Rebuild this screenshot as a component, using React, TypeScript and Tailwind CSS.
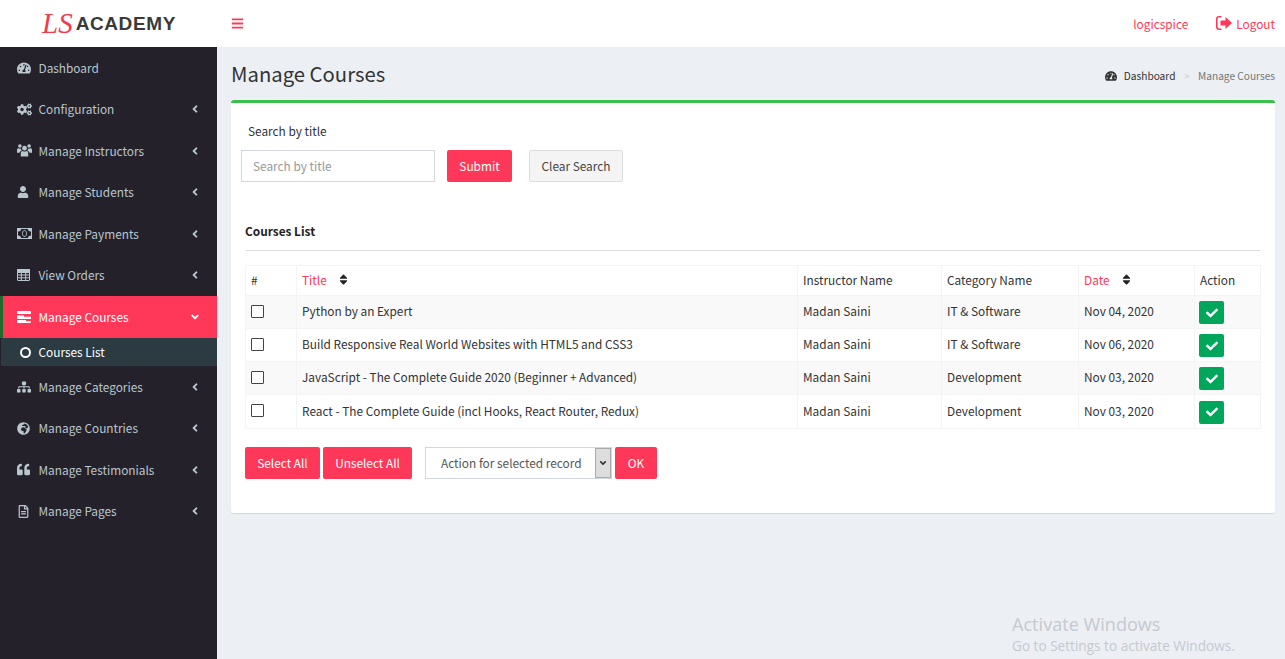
import React from "react";
import { FaTachometerAlt, FaCogs, FaUser, FaSitemap, FaGlobeAfrica, FaQuoteLeft, FaRegFileAlt, FaAngleLeft, FaAngleDown, FaBars, FaCheck, FaSort } from "react-icons/fa";

const font = { fontFamily: '"Noto Sans CJK SC", "Noto Sans", sans-serif' };

function CoursesIcon() {
  return (
    <svg viewBox="0 0 14 12" className="w-[14px] h-[12px]" fill="currentColor">
      <path d="M0 1a1 1 0 0 1 1-1h12a1 1 0 0 1 1 1v2H0zM0 4.500h7v1.200h7V8H0zM0 9h9v1.200h5V11a1 1 0 0 1-1 1H1a1 1 0 0 1-1-1z" />
    </svg>
  );
}

function LogoutIcon() {
  return (
    <svg viewBox="0 0 16 14" className="w-4 h-[14px]" fill="currentColor">
      <path d="M5.500 0H3a3 3 0 0 0-3 3v8a3 3 0 0 0 3 3h2.500v-1.600H3A1.400 1.400 0 0 1 1.600 11V3A1.400 1.400 0 0 1 3 1.600h2.500z" />
      <path d="M9.500 1 16 7l-6.500 6V9.500H4.500v-5h5z" />
    </svg>
  );
}

function UsersIcon() {
  return (
    <svg viewBox="0 0 15 13" className="w-[15px] h-[13px]" fill="currentColor">
      <circle cx="7.500" cy="4.200" r="2.400" />
      <path d="M3.800 12.500V9.300c0-1.500 1-2.300 2-2.300.5.400 1 .6 1.700.6s1.200-.2 1.700-.6c1 0 2 .8 2 2.300v3.200z" />
      <circle cx="2.900" cy="2" r="1.800" />
      <circle cx="12.100" cy="2" r="1.800" />
      <path d="M0 8.700V6c0-1.100.7-1.700 1.500-1.700.4.300.9.500 1.400.5.300 0 .6 0 .9-.2.100.7.400 1.300 1 1.800-1.300.4-2.100 1.300-2.200 2.300zM15 8.700V6c0-1.100-.7-1.700-1.500-1.700-.4.300-.9.500-1.400.5-.3 0-.6 0-.9-.2-.1.700-.4 1.300-1 1.800 1.300.4 2.100 1.300 2.200 2.300z" />
    </svg>
  );
}

function MoneyIcon() {
  return (
    <svg viewBox="0 0 15 11" className="w-[15px] h-[11px]">
      <path fill="currentColor" fillRule="evenodd" d="M0 0h15v11H0zM1 1v9h13V1z" />
      <path fill="currentColor" d="M1 1h3.200a3 3 0 0 1-3.200 2.600zM14 1h-3.200A3 3 0 0 0 14 3.600zM1 10h3.200A3 3 0 0 0 1 7.400zM14 10h-3.200a3 3 0 0 1 3.200-2.600z" />
      <path fill="none" stroke="currentColor" strokeWidth="1" d="M7.500 2.500c1.300 0 2 1.300 2 3s-.7 3-2 3-2-1.300-2-3 .7-3 2-3z" />
    </svg>
  );
}

function TableIcon() {
  return (
    <svg viewBox="0 0 13 12" className="w-[13px] h-[12px]" fill="none" stroke="currentColor">
      <rect x="0.500" y="0.500" width="12" height="11" rx="0.500" />
      <path d="M0 3.500h13M0 6h13M0 8.800h13M4.300 0v12M8.700 0v12" />
      <path d="M0 0h13v3H0z" fill="currentColor" />
    </svg>
  );
}

const topMenu = [
  { label: "Dashboard", icon: <FaTachometerAlt size={14} />, noArrow: true },
  { label: "Configuration", icon: <FaCogs size={15} /> },
  { label: "Manage Instructors", icon: <UsersIcon /> },
  { label: "Manage Students", icon: <FaUser size={12} /> },
  { label: "Manage Payments", icon: <MoneyIcon /> },
  { label: "View Orders", icon: <TableIcon /> },
];
const bottomMenu = [
  { label: "Manage Categories", icon: <FaSitemap size={14} /> },
  { label: "Manage Countries", icon: <FaGlobeAfrica size={13} /> },
  { label: "Manage Testimonials", icon: <FaQuoteLeft size={13} /> },
  { label: "Manage Pages", icon: <FaRegFileAlt size={13} /> },
];

function MenuItem({ label, icon, noArrow }: { label: string; icon: React.ReactNode; noArrow?: boolean }) {
  return (
    <div className="h-[41.5px] flex items-center pl-[17px] pr-[16px] text-[#b8c7ce]">
      <span className="w-[21.500px] flex items-center shrink-0">{icon}</span>
      <span className="flex-1">{label}</span>
      {!noArrow && <FaAngleLeft size={12} />}
    </div>
  );
}

const rows = [
  ["Python by an Expert", "Madan Saini", "IT & Software", "Nov 04, 2020", "h-[33px] bg-[#f9f9f9]"],
  ["Build Responsive Real World Websites with HTML5 and CSS3", "Madan Saini", "IT & Software", "Nov 06, 2020", "h-[33px] bg-white"],
  ["JavaScript - The Complete Guide 2020 (Beginner + Advanced)", "Madan Saini", "Development", "Nov 03, 2020", "h-[33px] bg-[#f9f9f9]"],
  ["React - The Complete Guide (incl Hooks, React Router, Redux)", "Madan Saini", "Development", "Nov 03, 2020", "h-[34px] bg-white"],
];

const th = "border border-[#f4f4f4] px-[5px] pb-[2px] font-normal text-left leading-[18px]";
const td = "border border-[#f4f4f4] px-[5px] pt-0 pb-[2px] leading-[18px]";

export default function App() {
  return (
    <div style={font} className="h-[659px] w-[1285px] overflow-hidden relative bg-[#ecf0f5] text-[11.850px] text-[#333]">
      <header className="h-[47px] bg-white flex items-center">
        <div className="w-[217px] pl-[42px] flex items-center gap-[3px] shrink-0">
          <span className="text-[#f5394f] text-[29px] leading-none italic" style={{ fontFamily: '"Liberation Serif", serif' }}>LS</span>
          <span className="text-[#3a3a3a] text-[19px] font-bold leading-none tracking-[0.6px]" style={{ fontFamily: '"Liberation Sans", sans-serif' }}>ACADEMY</span>
        </div>
        <button className="ml-[14px] text-[#ff3859]"><FaBars size={13} /></button>
        <div className="ml-auto pr-[10px] flex items-center text-[#ff3859]">
          <span>logicspice</span>
          <span className="ml-[28px] flex items-center gap-[4px]"><LogoutIcon />Logout</span>
        </div>
      </header>
      <div className="flex h-[612px]">
        <aside className="w-[217px] bg-[#25212a] shrink-0">
          {topMenu.map((m) => <MenuItem key={m.label} {...m} />)}
          <div className="h-[42px] flex items-center pr-[16px] bg-[#ff3859] text-white border-l-[3px] border-[#1f6b2b] pl-[14px]">
            <span className="w-[21.500px] flex items-center shrink-0"><CoursesIcon /></span>
            <span className="flex-1">Manage Courses</span>
            <FaAngleDown size={12} />
          </div>
          <div className="h-[28px] ml-[1px] flex items-center pl-[19px] bg-[#2c3b41] text-white">
            <span className="w-[11px] h-[11px] rounded-full border-2 border-white mr-[7.500px]" />
            Courses List
          </div>
          {bottomMenu.map((m) => <MenuItem key={m.label} {...m} />)}
        </aside>
        <main className="flex-1 pl-[14px] pr-[10px]">
          <div className="h-[53px] flex items-center justify-between">
            <h1 className="text-[20.300px] text-[#333] pb-[1px] leading-[30px]">Manage Courses</h1>
            <div className="flex items-center text-[10.150px] pt-[5px]">
              <FaTachometerAlt size={12} className="text-[#333] mr-[7px]" />
              <span className="text-[#333]">Dashboard</span>
              <span className="text-[#ccc] mx-[8.500px]">&gt;</span>
              <span className="text-[#777]">Manage Courses</span>
            </div>
          </div>
          <section className="bg-white border-t-[3px] border-[#3cc04c] rounded-[3px] shadow-[0_1px_1px_rgba(0,0,0,0.1)] h-[413px] px-[10px] pt-[19px]">
            <label className="block pl-[7px] h-[28px] leading-[17px]">Search by title</label>
            <div className="flex items-center">
              <input placeholder="Search by title" className="w-[194px] h-[32px] border border-[#d2d6de] pl-[11px] pr-[12px] pb-[2px] placeholder:text-[#999] outline-none" />
              <button className="ml-[12px] w-[65px] h-[32px] rounded-[2px] bg-[#ff3859] text-white">Submit</button>
              <button className="ml-[17px] w-[94px] h-[32px] rounded-[2px] bg-[#f4f4f4] border border-[#ddd] text-[#444]">Clear Search</button>
            </div>
            <div className="mt-[40px] mx-[4px] -mr-[-5px] h-[29px] border-b border-[#ddd] font-bold text-[#222] leading-[18px]">Courses List</div>
            <div className="ml-[4px] mt-[14px]">
              <table className="w-[1015px] table-fixed border-collapse">
                <colgroup>
                  <col className="w-[51px]" /><col className="w-[501px]" /><col className="w-[144px]" /><col className="w-[137px]" /><col className="w-[116px]" /><col className="w-[66px]" />
                </colgroup>
                <thead>
                  <tr className="h-[30px]">
                    <th className={th}>#</th>
                    <th className={th}><span className="inline-flex items-center text-[#ff3859]">Title<FaSort size={13} className="ml-[10px] text-[#222]" /></span></th>
                    <th className={th}>Instructor Name</th>
                    <th className={th}>Category Name</th>
                    <th className={th}><span className="inline-flex items-center text-[#ff3859]">Date<FaSort size={13} className="ml-[10px] text-[#222]" /></span></th>
                    <th className={th}>Action</th>
                  </tr>
                </thead>
                <tbody>
                  {rows.map((r) => (
                    <tr key={r[0]} className={r[4]}>
                      <td className={td}><span className="block w-[13px] h-[13px] border border-[#444] rounded-[1px] bg-white" /></td>
                      <td className={td}>{r[0]}</td>
                      <td className={td}>{r[1]}</td>
                      <td className={td}>{r[2]}</td>
                      <td className={td}>{r[3]}</td>
                      <td className={td}>
                        <span className="mt-[3px] -ml-[1px] flex items-center justify-center w-[25px] h-[23px] rounded-[2px] bg-[#00a65a] text-white"><FaCheck size={12} /></span>
                      </td>
                    </tr>
                  ))}
                </tbody>
              </table>
            </div>
            <div className="ml-[4px] mt-[18px] flex items-center">
              <button className="w-[75px] h-[32px] rounded-[2px] bg-[#ff3859] text-white">Select All</button>
              <button className="ml-[3px] w-[89px] h-[32px] rounded-[2px] bg-[#ff3859] text-white">Unselect All</button>
              <div className="ml-[13px] w-[187px] h-[32px] border border-[#d2d6de] flex items-center pl-[15px] text-[#555]">
                <span className="flex-1">Action for selected record</span>
                <span className="w-[16px] h-[30px] bg-[#ddd] border border-[#aaa] flex items-center justify-center text-[#333]"><FaAngleDown size={10} /></span>
              </div>
              <button className="ml-[3px] w-[42px] h-[32px] rounded-[2px] bg-[#ff3859] text-white">OK</button>
            </div>
          </section>
        </main>
      </div>
      <div className="absolute left-[1012px] top-[612px] text-[#c5c9ce] leading-none" style={{ fontFamily: '"Open Sans", sans-serif' }}>
        <div className="text-[18.100px] leading-[24px]">Activate Windows</div>
        <div className="text-[13.600px] leading-[20px]">Go to Settings to activate Windows.</div>
      </div>
    </div>
  );
}
